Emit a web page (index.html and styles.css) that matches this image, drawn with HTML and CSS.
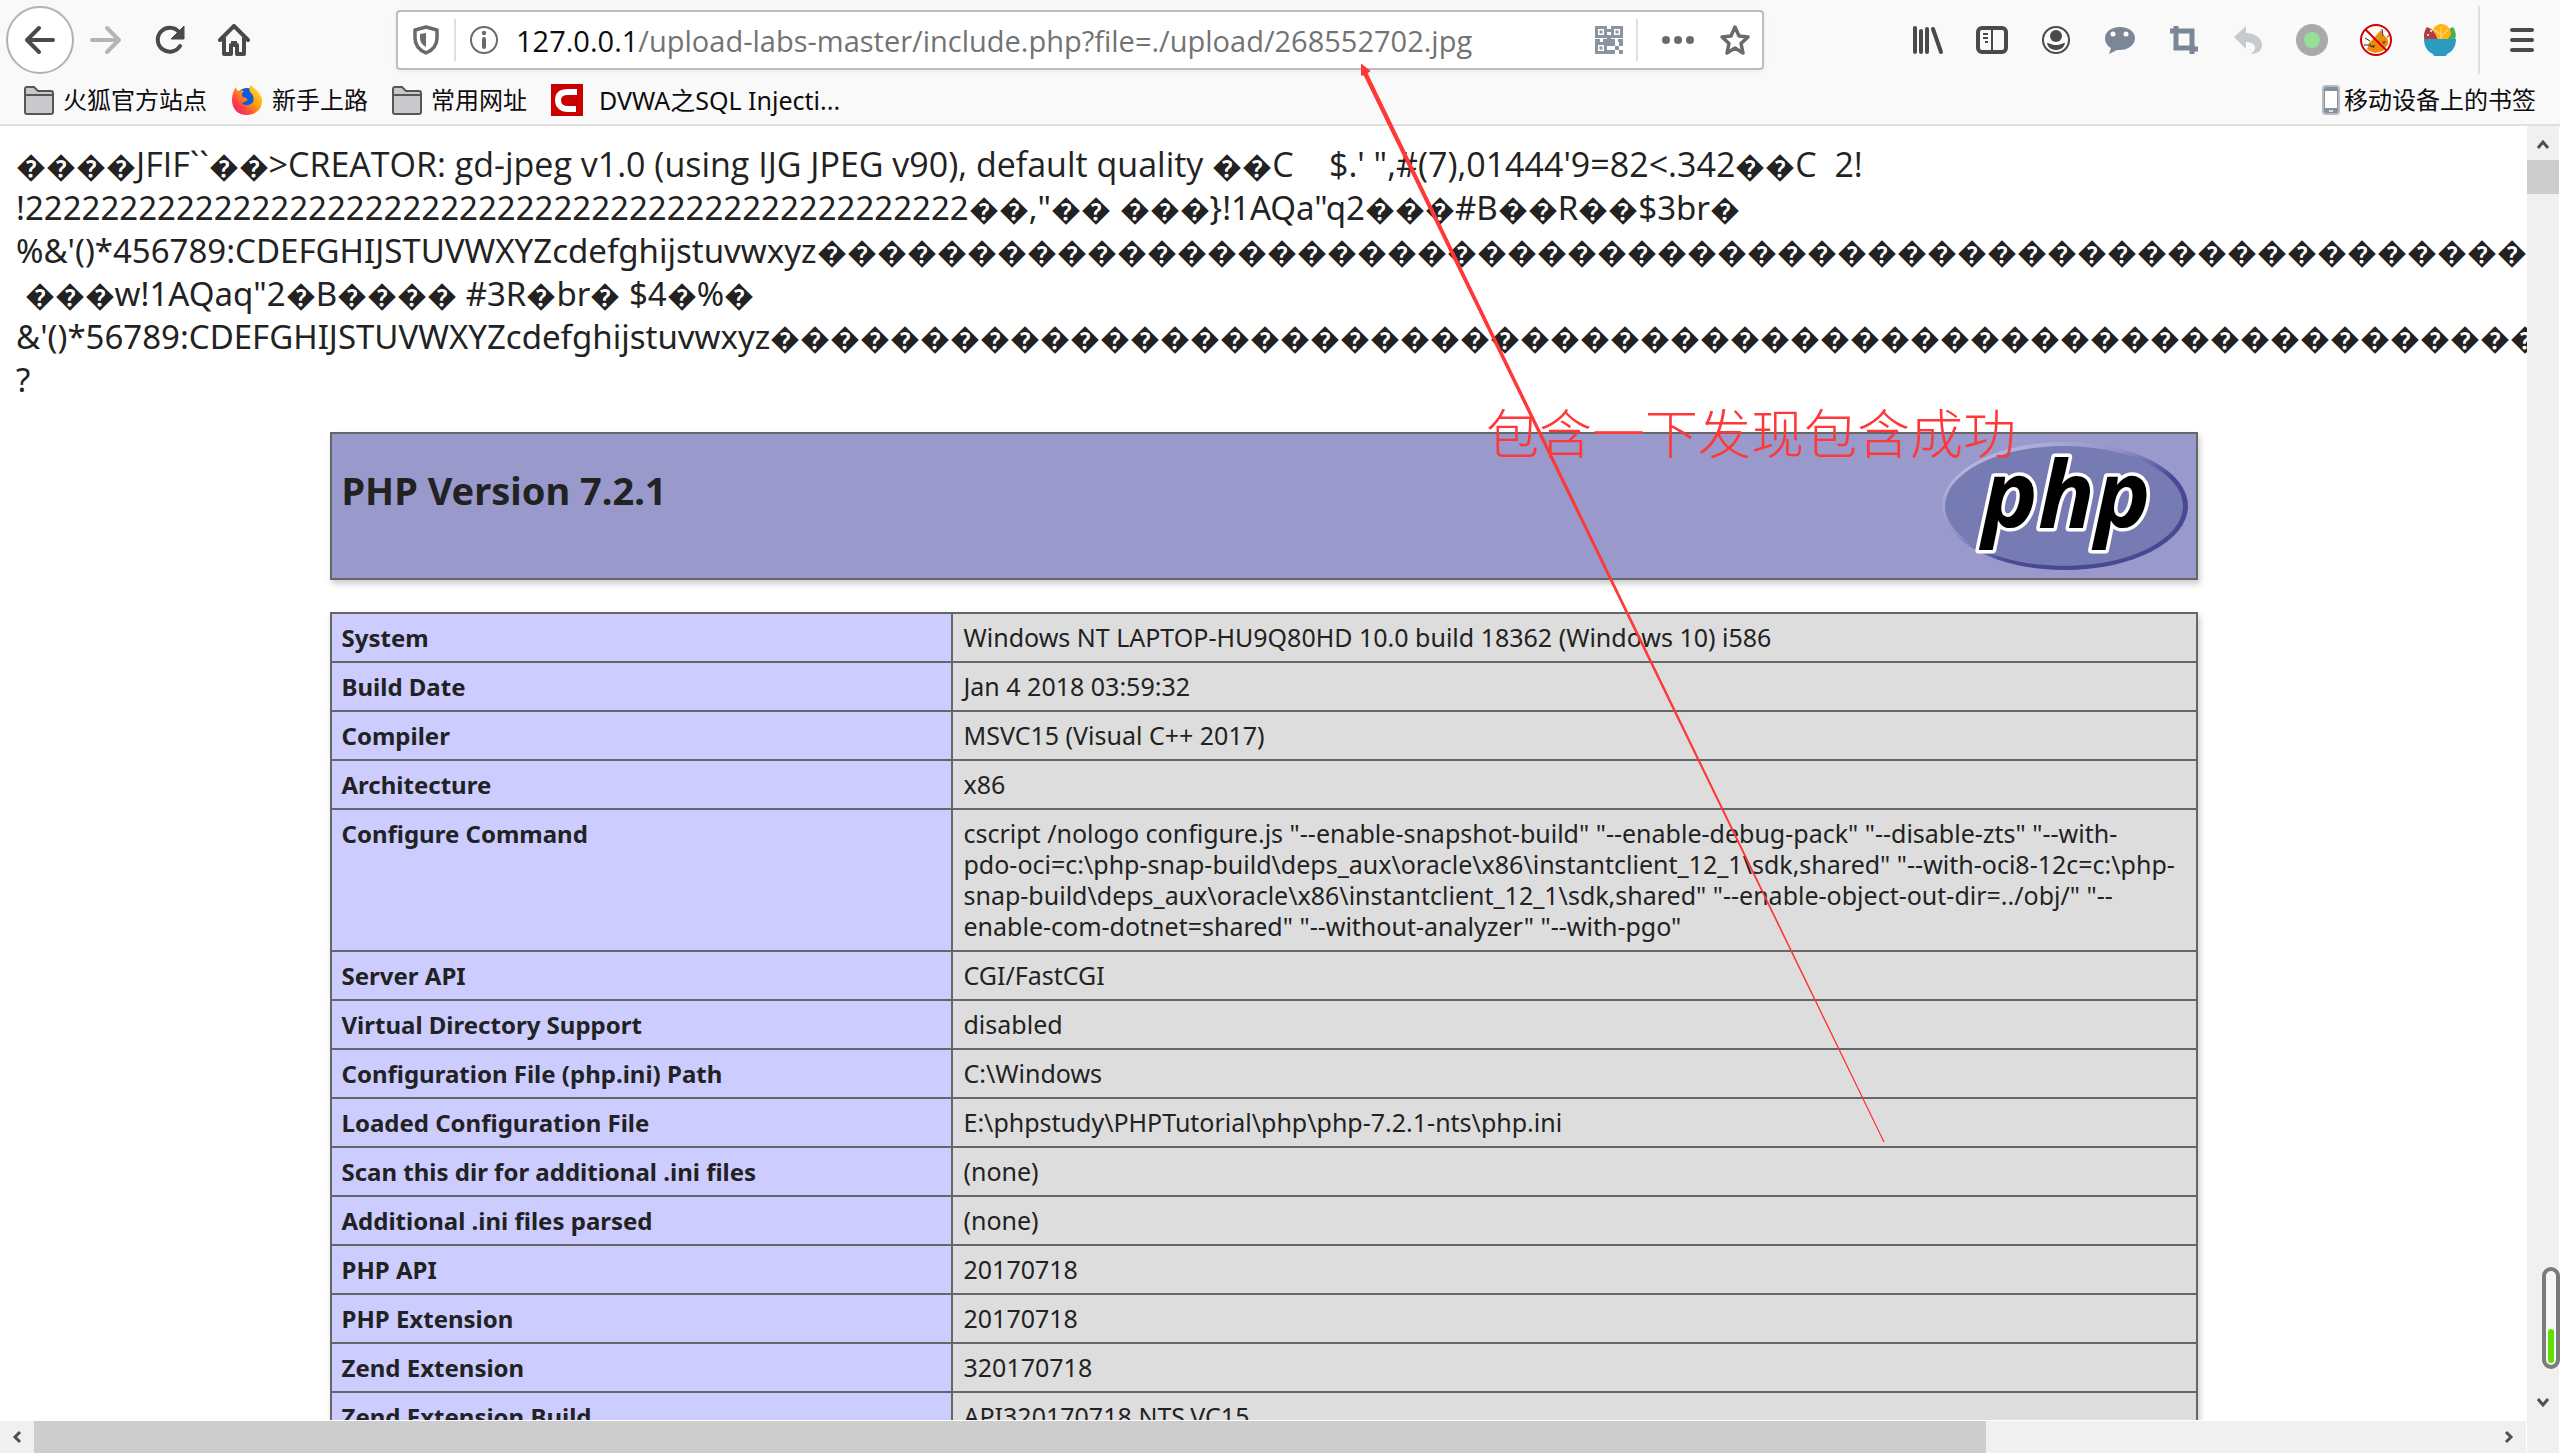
FILE: index.html
```html
<!DOCTYPE html>
<html lang="zh-CN">
<head>
<meta charset="utf-8">
<title>phpinfo()</title>
<link rel="stylesheet" href="styles.css">
</head>
<body>
<header class="chrome">
  <nav class="toolbar" aria-label="导航">
    <div class="nav-buttons">
      <button class="tool back" aria-label="后退"><svg width="32" height="32" viewBox="0 0 32 32"><path d="M29 16H4M15 4 3 16l12 12" fill="none" stroke="#4a4a4b" stroke-width="4" stroke-linecap="round" stroke-linejoin="round"/></svg></button>
      <button class="tool" aria-label="前进"><svg width="32" height="32" viewBox="0 0 32 32"><path d="M2 16h26M17 4l12 12-12 12" fill="none" stroke="#b5b5b6" stroke-width="4" stroke-linecap="round" stroke-linejoin="round"/></svg></button>
      <button class="tool" aria-label="刷新"><svg width="32" height="32" viewBox="0 0 32 32"><path d="M26 22A12 12 0 1 1 25 8" fill="none" stroke="#4a4a4b" stroke-width="4" stroke-linecap="round"/><path d="M30 2v13H17z" fill="#4a4a4b" stroke="#4a4a4b" stroke-width="1" stroke-linejoin="round"/></svg></button>
      <button class="tool" aria-label="主页"><svg width="32" height="32" viewBox="0 0 32 32"><path d="M2 16 16 2l14 14M6 14v16h7v-9h6v9h7V14" fill="none" stroke="#4a4a4b" stroke-width="4" stroke-linecap="round" stroke-linejoin="round"/><path d="M13 17h6v4h-6z" fill="#4a4a4b"/></svg></button>
    </div>
    <div class="urlbar">
      <button class="url-icon shield" aria-label="跟踪保护"><svg width="28" height="30" viewBox="0 0 28 30"><path d="M14 2 25 5v8c0 7-4 12-11 15C7 25 3 20 3 13V5z" fill="none" stroke="#6a6a6b" stroke-width="3.500" stroke-linejoin="round"/><path d="M14 8v14c-4-2-6-5-6-9V9z" fill="#6a6a6b"/></svg></button>
      <button class="url-icon" aria-label="网站信息"><svg width="30" height="30" viewBox="0 0 30 30"><circle cx="15" cy="15" r="13" fill="none" stroke="#6a6a6b" stroke-width="2"/><circle cx="15" cy="8" r="2.200" fill="#6a6a6b"/><path d="M15 14v8" stroke="#6a6a6b" stroke-width="4" stroke-linecap="round"/></svg></button>
      <label class="url-host" for="url">127.0.0.1</label>
      <input class="url-path" id="url" type="text" value="/upload-labs-master/include.php?file=./upload/268552702.jpg">
      <button class="url-icon qr" aria-label="二维码"><svg width="30" height="30" viewBox="0 0 30 30"><g fill="none" stroke="#8b95a2" stroke-width="3"><path d="M2.500 2.500h9v9h-9zM18.500 2.500h9v9h-9zM2.500 18.500h9v9h-9z"/></g><path d="M5.500 5.500h3v3h-3zM21.500 5.500h3v3h-3zM5.500 21.500h3v3h-3zM13 4h4v3h-4zM13 10h4v4h4v3h-4v4h-4v-4H9v-3h4zM1 14h5v3H1zM24 14h5v3h-5zM17 17h4v4h-4zM21 21h4v-4h4v4h-4v4h4v4h-4v-4h-4v4h-4v-4h4zM13 25h4v4h-4z" fill="#8b95a2"/></svg></button>
      <button class="url-icon dots" aria-label="页面操作"><svg width="32" height="30" viewBox="0 0 32 30"><g fill="#6a6a6b"><circle cx="4" cy="15" r="4"/><circle cx="16" cy="15" r="4"/><circle cx="28" cy="15" r="4"/></g></svg></button>
      <button class="url-icon star" aria-label="加入书签"><svg width="34" height="34" viewBox="0 0 34 34"><path d="m17 4 4 9 9 1-7 6.500 2 9.500-8-5-8 5 2-9.500L4 14l9-1z" fill="none" stroke="#6a6a6b" stroke-width="3.500" stroke-linejoin="round"/></svg></button>
    </div>
    <div class="tools">
      <button class="tool" aria-label="书库"><svg width="32" height="30" viewBox="0 0 32 30"><path d="M3 3v24M9 6v21M15 4v23M21 4l8 23" stroke="#4a4a4b" stroke-width="4" stroke-linecap="round"/></svg></button>
      <button class="tool" aria-label="侧栏"><svg width="32" height="30" viewBox="0 0 32 30"><rect x="2" y="3" width="28" height="24" rx="4" fill="none" stroke="#4a4a4b" stroke-width="4"/><path d="M16 3v24" stroke="#4a4a4b" stroke-width="2"/><path d="M7 9h5M7 13h5M9 17h3" stroke="#4a4a4b" stroke-width="2"/></svg></button>
      <button class="tool" aria-label="账户"><svg width="30" height="30" viewBox="0 0 30 30"><circle cx="15" cy="15" r="13" fill="none" stroke="#4a4a4b" stroke-width="2"/><circle cx="15" cy="11" r="6" fill="#4a4a4b"/><path d="M6 18c3 0 4 2 9 2s6-2 9-2c-1 5-5 7-9 7s-8-2-9-7z" fill="#4a4a4b"/></svg></button>
      <button class="tool" aria-label="聊天"><svg width="32" height="30" viewBox="0 0 32 30"><path d="M16 2c9 0 15 5 15 11s-6 12-15 12l-3 0-8 4 2-6c-4-2-6-6-6-10C1 7 7 2 16 2z" fill="#7b8794"/><circle cx="9" cy="9" r="2.500" fill="#fff"/><circle cx="22" cy="9" r="2.500" fill="#fff"/></svg></button>
      <button class="tool" aria-label="截图"><svg width="30" height="30" viewBox="0 0 30 30"><path d="M1 6h22v18h6M7 1v22h19M23 20v9" fill="none" stroke="#7b8794" stroke-width="5"/></svg></button>
      <button class="tool" aria-label="撤销"><svg width="30" height="30" viewBox="0 0 30 30"><path d="M13 1v7c9 0 16 5 16 12 0 5-4 9-11 9 7-5 5-12-5-12v7L1 12z" fill="#c6cad1"/></svg></button>
      <button class="tool" aria-label="状态"><svg width="32" height="32" viewBox="0 0 32 32"><circle cx="16" cy="16" r="16" fill="#a9a9a9"/><circle cx="16" cy="16" r="8" fill="#97de98"/></svg></button>
      <button class="tool" aria-label="代理已停用"><svg width="32" height="32" viewBox="0 0 32 32"><path d="m21 6 2 5c4 2 6 5 5 9l-5 7-8 2-8-3 2-7 4-4z" fill="#ee8a0c"/><path d="m22 5 1 7M5 14l5 3M27 13l3-2M4 21l7 0" stroke="#333" stroke-width="1"/><path d="m9 22 6-1-1 3zM22 18l4-1-2 3z" fill="#553a26"/><circle cx="16" cy="16" r="15" fill="none" stroke="#d00000" stroke-width="2"/><path d="m5.500 5.500 21 21" stroke="#d00000" stroke-width="2"/></svg></button>
      <button class="tool" aria-label="扩展"><svg width="32" height="32" viewBox="0 0 32 32"><path d="M3 3c6 2 10 7 11 14H1C-1 12 0 7 3 3z" fill="#b13d43"/><path d="M29 3c3 5 4 9 1 14H20c0-6 3-12 9-14z" fill="#4fae48"/><path d="M17 0c6 0 10 5 10 10l-5 8-8-3-5-10c2-3 5-5 8-5z" fill="#ffb414"/><path d="M17 3v12M11 6l7 6 6-6" stroke="#ffe08a" stroke-width="1" fill="none"/><circle cx="4" cy="11" r="1" fill="#fff"/><circle cx="7" cy="7" r="1" fill="#fff"/><path d="M0 15h32c0 8-4 13-9 15l-1 2H10l-1-2C4 28 0 23 0 15z" fill="#2c9bbd"/></svg></button>
    </div>
    <button class="tool menu" aria-label="菜单"><svg width="24" height="26" viewBox="0 0 24 26"><path d="M2 3h20M2 13h20M2 23h20" stroke="#4a4a4b" stroke-width="4" stroke-linecap="round"/></svg></button>
  </nav>
  <nav class="bookmarks" aria-label="书签">
    <a class="bookmark" href="#"><svg width="30" height="30" viewBox="0 0 30 30"><path d="M1 27V4q0-2 2-2h7l4 4h13q2 0 2 2v19q0 2-2 2H3q-2 0-2-2z" fill="#c9c9cb" stroke="#55555a" stroke-width="2"/><path d="M1 10h28" stroke="#55555a" stroke-width="2"/></svg>火狐官方站点</a>
    <a class="bookmark" href="#"><svg width="32" height="32" viewBox="0 0 32 32"><defs><linearGradient id="fx" x1="1" y1="0" x2="0" y2="1"><stop offset="0" stop-color="#fff34a"/><stop offset=".45" stop-color="#ff980e"/><stop offset=".75" stop-color="#ff3750"/><stop offset="1" stop-color="#e6158a"/></linearGradient></defs><circle cx="16" cy="16" r="12" fill="#0b5bdc"/><path d="M20 1c2 3 9 6 11 14 1 9-6 16-15 16S1 25 1 16c0-5 1-9 4-13 0 2 1 3 2 4 2-1 4-1 6 0-2 2-3 4-1 6 3 1 5 1 4 4-2 0-3 2-5 2 2 3 8 3 11-1 2-5-1-8-3-10-1-2-1-5 1-7z" fill="url(#fx)"/></svg>新手上路</a>
    <a class="bookmark" href="#"><svg width="30" height="30" viewBox="0 0 30 30"><path d="M1 27V4q0-2 2-2h7l4 4h13q2 0 2 2v19q0 2-2 2H3q-2 0-2-2z" fill="#c9c9cb" stroke="#55555a" stroke-width="2"/><path d="M1 10h28" stroke="#55555a" stroke-width="2"/></svg>常用网址</a>
    <a class="bookmark wide" href="#"><svg width="32" height="32" viewBox="0 0 32 32"><path d="M0 0h32v32H0z" fill="#c80000"/><path d="M26 8H17c-7 0-10 3-10 8s3 9 10 9h8" fill="none" stroke="#fff" stroke-width="6"/></svg>DVWA之SQL Injecti...</a>
    <a class="bookmark mobile" href="#"><svg width="18" height="30" viewBox="0 0 18 30"><rect x="1" y="1" width="16" height="28" rx="3" fill="#84909b" stroke="#b4bbc2" stroke-width="2"/><path d="M3 6h12v17H3z" fill="#fff"/><path d="M7 26h4" stroke="#dfe3e7" stroke-width="2"/></svg>移动设备上的书签</a>
  </nav>
</header>

<main class="frame">
  <div class="page">
    <div class="dump">
      <div class="lead"><span class="bad">����</span>JFIF``<span class="bad">��</span>&gt;CREATOR: gd-jpeg v1.0 (using IJG JPEG v90), default quality <span class="bad">��</span>C    $.' ",#(7),01444'9=82&lt;.342<span class="bad">��</span>C  2!</div>
      <div>!22222222222222222222222222222222222222222222222222<span class="bad">��</span>,"<span class="bad">��</span> <span class="bad">���</span>}!1AQa"q2<span class="bad">���</span>#B<span class="bad">��</span>R<span class="bad">��</span>$3br<span class="bad">�</span></div>
      <div>%&amp;'()*456789:CDEFGHIJSTUVWXYZcdefghijstuvwxyz<span class="bad">����������������������������������������������������������������</span></div>
      <div> <span class="bad">���</span>w!1AQaq"2<span class="bad">�</span>B<span class="bad">����</span> #3R<span class="bad">�</span>br<span class="bad">�</span> $4<span class="bad">�</span>%<span class="bad">�</span></div>
      <div>&amp;'()*56789:CDEFGHIJSTUVWXYZcdefghijstuvwxyz<span class="bad">����������������������������������������������������������������</span></div>
      <div>?</div>
    </div>
    <div class="info">
      <div class="banner">
        <h1>PHP Version 7.2.1</h1>
        <svg class="logo" width="246" height="128" viewBox="0 0 246 128" role="img" aria-label="PHP logo">
          <defs><linearGradient id="rim" x1="0" y1="0" x2="1" y2="1"><stop offset=".15" stop-color="#b4b4dc"/><stop offset=".4" stop-color="#9090c6"/><stop offset=".6" stop-color="#484893"/><stop offset=".8" stop-color="#484893"/></linearGradient></defs>
          <ellipse cx="123" cy="64" rx="123" ry="64" fill="url(#rim)"/>
          <ellipse cx="122" cy="64" rx="119" ry="60" fill="#777bb3"/>
          <text class="logo-text" x="40" y="86">php</text>
        </svg>
      </div>
      <table class="facts">
        <tbody>
          <tr><th scope="row">System</th><td>Windows NT LAPTOP-HU9Q80HD 10.0 build 18362 (Windows 10) i586</td></tr>
          <tr><th scope="row">Build Date</th><td>Jan 4 2018 03:59:32</td></tr>
          <tr><th scope="row">Compiler</th><td>MSVC15 (Visual C++ 2017)</td></tr>
          <tr><th scope="row">Architecture</th><td>x86</td></tr>
          <tr><th scope="row">Configure Command</th><td>cscript /nologo configure.js "--enable-snapshot-build" "--enable-debug-pack" "--disable-zts" "--with-<wbr><span class="keep">pdo-oci=c:\php-snap-build\deps_aux\oracle\x86\instantclient_12_1\sdk,shared"</span> "--with-oci8-12c=c:\php-<wbr>snap-build\deps_aux\oracle\x86\instantclient_12_1\sdk,shared" "--enable-object-out-dir=../obj/" "--<wbr>enable-com-dotnet=shared" "--without-analyzer" "--with-pgo"</td></tr>
          <tr><th scope="row">Server API</th><td>CGI/FastCGI</td></tr>
          <tr><th scope="row">Virtual Directory Support</th><td>disabled</td></tr>
          <tr><th scope="row">Configuration File (php.ini) Path</th><td>C:\Windows</td></tr>
          <tr><th scope="row">Loaded Configuration File</th><td>E:\phpstudy\PHPTutorial\php\php-7.2.1-nts\php.ini</td></tr>
          <tr><th scope="row">Scan this dir for additional .ini files</th><td>(none)</td></tr>
          <tr><th scope="row">Additional .ini files parsed</th><td>(none)</td></tr>
          <tr><th scope="row">PHP API</th><td>20170718</td></tr>
          <tr><th scope="row">PHP Extension</th><td>20170718</td></tr>
          <tr><th scope="row">Zend Extension</th><td>320170718</td></tr>
          <tr><th scope="row">Zend Extension Build</th><td>API320170718,NTS,VC15</td></tr>
        </tbody>
      </table>
    </div>
  </div>
  <div class="vbar">
    <svg width="32" height="34" viewBox="0 0 32 34"><path d="m11 22 5-6 5 6" fill="none" stroke="#505050" stroke-width="3"/></svg>
    <div class="vthumb"></div>
    <svg class="down" width="32" height="34" viewBox="0 0 32 34"><path d="m11 13 5 6 5-6" fill="none" stroke="#505050" stroke-width="3"/></svg>
  </div>
  <div class="hbar">
    <svg width="34" height="32" viewBox="0 0 34 32"><path d="m20 11-5 5 5 5" fill="none" stroke="#505050" stroke-width="3"/></svg>
    <div class="hthumb"></div>
    <svg class="right" width="34" height="32" viewBox="0 0 34 32"><path d="m14 11 5 5-5 5" fill="none" stroke="#505050" stroke-width="3"/></svg>
  </div>
</main>

<div class="gauge"><div class="gauge-level"></div></div>
<svg class="arrow" width="524" height="1079" viewBox="0 0 524 1079" aria-hidden="true"><path d="M0 0 9 7 6 9 523 1078 3 11 0 11z" fill="#ff3737" stroke="#ff3737" stroke-width="1"/></svg>
<p class="note">包含一下发现包含成功</p>
</body>
</html>
```
FILE: styles.css
```css
* { box-sizing: border-box; }

body {
  margin: 0;
  height: 100vh;
  display: flex;
  flex-direction: column;
  overflow: hidden;
  background: #fff;
  color: #222;
  font-family: "Noto Sans", "Noto Sans CJK SC", sans-serif;
}

button { border: 0; padding: 0; background: none; }
svg { display: block; flex: none; }

/* Browser toolbars */
.chrome {
  flex: none;
  background: #f9f9fa;
  border-bottom: 2px solid #e0e0e1;
}
.toolbar {
  display: flex;
  align-items: center;
  height: 80px;
  padding: 0 6px;
}
.nav-buttons, .tools { display: flex; align-items: center; }
.tool {
  width: 64px;
  height: 64px;
  display: flex;
  align-items: center;
  justify-content: center;
}
.back {
  width: 68px;
  height: 68px;
  border: 2px solid #b1b1b1;
  border-radius: 50%;
  background: #fff;
}
.menu { position: relative; margin-left: 18px; }
.menu::before {
  content: "";
  position: absolute;
  left: -12px;
  top: -2px;
  height: 68px;
  border-left: 2px solid #dedede;
}

.urlbar {
  flex: 1;
  min-width: 0;
  display: flex;
  align-items: center;
  height: 60px;
  margin: 0 132px 0 130px;
  border: 2px solid #bdbdbd;
  border-radius: 4px;
  background: #fff;
  box-shadow: 0 2px 6px #0000000d;
  font-family: "Open Sans", sans-serif;
  font-size: 29px;
}
.url-icon {
  width: 56px;
  height: 42px;
  display: flex;
  align-items: center;
  justify-content: center;
}
.shield { width: 58px; border-right: 2px solid #e0e0e0; }
.url-host { margin-left: 4px; color: #0c0c0d; }
.url-path {
  flex: 1;
  min-width: 0;
  border: 0;
  padding: 0;
  outline: 0;
  background: none;
  color: #737373;
  font: inherit;
}
.qr { border-right: 2px solid #e0e0e0; }
.dots { width: 80px; }
.star { width: 44px; justify-content: start; }

.bookmarks {
  display: flex;
  align-items: center;
  gap: 24px;
  height: 44px;
  padding: 0 24px 4px;
  font-size: 24px;
  line-height: 36px;
}
.bookmark {
  display: flex;
  align-items: center;
  gap: 9px;
  color: #0c0c0d;
  text-decoration: none;
}
.wide { gap: 16px; font-size: 25px; }
.mobile { gap: 4px; margin-left: auto; }

/* Document area with its scrollbars */
.frame {
  flex: 1;
  min-height: 0;
  display: grid;
  grid-template-columns: 1fr 33px;
  grid-template-rows: 1fr 33px;
}
.page {
  min-width: 0;
  overflow: hidden;
  padding-top: 17px;
}
.dump {
  margin-left: 16px;
  font-size: 33px;
  line-height: 43px;
}
.dump div { height: 43px; white-space: pre; }
.dump .lead { font-family: "Open Sans", sans-serif; font-size: 34px; }
.bad { font-family: "Noto Sans CJK SC", sans-serif; font-size: 30px; }

.info { max-width: 1868px; margin: 31px auto 0; }
.banner {
  display: flex;
  justify-content: space-between;
  align-items: flex-start;
  margin-bottom: 32px;
  padding: 8px 8px 8px 10px;
  border: 2px solid #666;
  background: #9999cc;
  box-shadow: 2px 4px 6px #ccc;
}
.banner h1 {
  margin: 22px 0 0;
  font-size: 38px;
  line-height: 52px;
}
.logo-text {
  font: italic 700 94px "Open Sans", sans-serif;
  fill: #000;
  stroke: #fff;
  stroke-width: 7px;
  stroke-linejoin: round;
  paint-order: stroke;
}
.facts {
  width: 100%;
  border-collapse: collapse;
  table-layout: fixed;
  box-shadow: 2px 4px 6px #ccc;
  line-height: 31px;
}
.facts th, .facts td {
  border: 2px solid #666;
  padding: 8px 10px;
  vertical-align: top;
  text-align: left;
}
.facts th { width: calc(100% / 3); background: #ccccff; font-size: 24px; }
.facts td { background: #ddd; font-size: 25px; }
.keep { white-space: nowrap; }

.vbar {
  grid-row: 1 / 3;
  grid-column: 2;
  display: flex;
  flex-direction: column;
  background: #f0f0f0;
  border-right: 1px solid #fff;
}
.vthumb { height: 34px; background: #cdcdcd; }
.down { margin-top: auto; margin-bottom: 33px; }
.hbar {
  grid-row: 2;
  grid-column: 1;
  display: flex;
  background: #f0f0f0;
  border: solid #fff;
  border-width: 1px 1px 0 0;
}
.hthumb { width: calc(78% - 18px); background: #cdcdcd; }
.right { margin-left: auto; }

/* Overlays */
.gauge {
  position: absolute;
  right: 0;
  bottom: 84px;
  width: 18px;
  height: 102px;
  display: flex;
  align-items: flex-end;
  padding: 2px;
  border: 4px solid #7b7b7b;
  border-radius: 9px;
  background: #f7f7f7;
}
.gauge-level { width: 100%; height: 34px; border-radius: 3px; background: #5fe000; }
.arrow { position: absolute; left: 1361px; top: 64px; }
.note {
  position: absolute;
  left: 1486px;
  top: 396px;
  margin: 0;
  color: #ff3737;
  font: 300 53px/70px "Noto Sans CJK SC", sans-serif;
}
```
